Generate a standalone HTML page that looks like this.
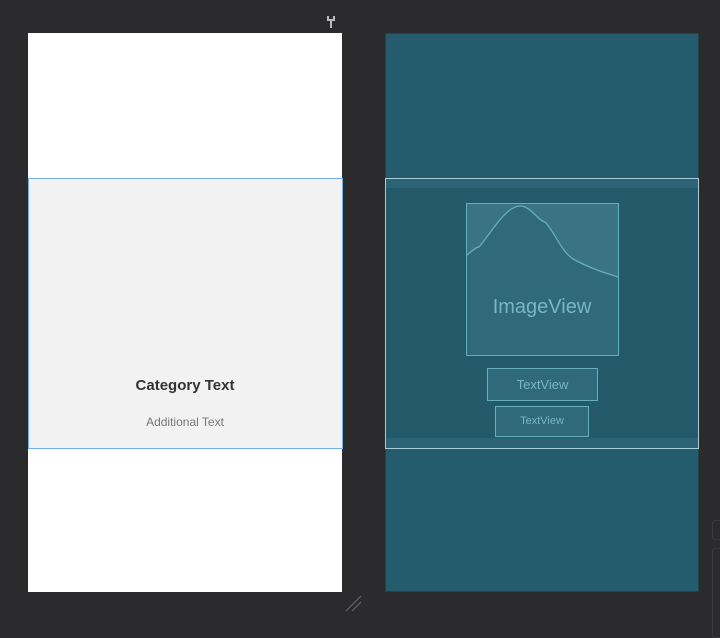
<!DOCTYPE html>
<html><head><meta charset="utf-8"><style>
html,body{margin:0;padding:0}
body{width:720px;height:636px;background:#2b2b2d;position:relative;overflow:hidden;font-family:"Liberation Sans",sans-serif}
.a{position:absolute;box-sizing:border-box}
</style></head><body>
<div class="a" style="left:28px;top:33px;width:314px;height:559px;background:#fff"></div>
<div class="a" style="left:28px;top:178px;width:315px;height:271px;background:#f2f2f2;border:1px solid #6fb0ea"></div>
<div class="a" style="left:28px;top:377px;width:314px;text-align:center;font-weight:bold;font-size:15px;color:#333">Category Text</div>
<div class="a" style="left:28px;top:415px;width:314px;text-align:center;font-size:12px;color:#777">Additional Text</div>

<div class="a" style="left:385px;top:33px;width:314px;height:559px;background:#245c6e;border:1px solid #1e4552"></div>
<div class="a" style="left:385px;top:178px;width:314px;height:271px;border:1px solid #a9cdd6;background:#235969"></div>
<div class="a" style="left:386px;top:179px;width:312px;height:9px;background:#2c6475"></div>
<div class="a" style="left:386px;top:438px;width:312px;height:10px;background:#2c6475"></div>
<svg class="a" style="left:466px;top:203px" width="153" height="153">
<rect x="0.5" y="0.5" width="152" height="152" fill="#3a7383" stroke="#66aebd"/>
<path d="M1,52 C6,48 10,44 13,44 C25,30 40,3 54,3 C65,3 72,18 79,19 C88,28 95,48 107,56 C125,66 140,70 152,74 L152,152 L1,152 Z" fill="#306979"/>
<path d="M1,52 C6,48 10,44 13,44 C25,30 40,3 54,3 C65,3 72,18 79,19 C88,28 95,48 107,56 C125,66 140,70 152,74" fill="none" stroke="#66aebd" stroke-width="1.3"/>
<rect x="0.5" y="0.5" width="152" height="152" fill="none" stroke="#66aebd"/>
<text x="76" y="110" text-anchor="middle" font-family="Liberation Sans,sans-serif" font-size="20" fill="#76b7c6">ImageView</text>
</svg>
<div class="a" style="left:487px;top:368px;width:111px;height:33px;border:1px solid #66aebd;background:#306979;color:#76b7c6;font-size:13px;text-align:center;line-height:31px">TextView</div>
<div class="a" style="left:495px;top:406px;width:94px;height:31px;border:1px solid #66aebd;background:#306979;color:#76b7c6;font-size:11px;text-align:center;line-height:29px">TextView</div>

<svg class="a" style="left:325px;top:15px" width="12" height="14"><path d="M3,1 v4 h6 v-4 M6,5 v8" stroke="#bbb" stroke-width="2" fill="none"/></svg>
<svg class="a" style="left:344px;top:595px" width="20" height="18"><path d="M2,16 L17,1 M8,16 L17,7" stroke="#666" stroke-width="1.2"/></svg>
<div class="a" style="left:712px;top:520px;width:10px;height:20px;border:1px solid #3a3a3c;border-radius:3px"></div>
<div class="a" style="left:712px;top:548px;width:10px;height:90px;border:1px solid #3a3a3c;border-radius:3px"></div>
</body></html>
